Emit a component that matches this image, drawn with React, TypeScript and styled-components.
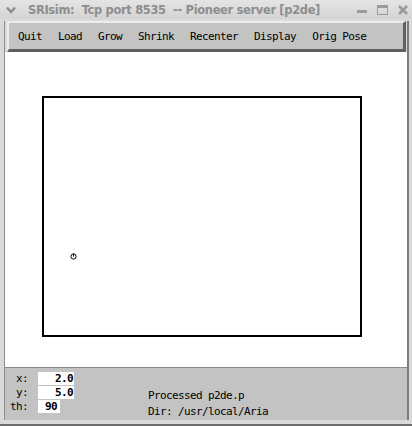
import React from "react";
import styled, { createGlobalStyle } from "styled-components";

const GlobalStyle = createGlobalStyle`
  html, body { margin: 0; padding: 0; background: #d9d9d9; overflow: hidden; }
  * { box-sizing: border-box; }
`;

const MONO = `"DejaVu Sans Mono", "Liberation Mono", monospace`;

const Window = styled.div`
  width: 412px;
  height: 426px;
  display: flex;
  flex-direction: column;
  background: #dadada;
  border-bottom: 2px solid #6e6e6e;
`;

const TitleBar = styled.div`
  height: 19px;
  display: flex;
  align-items: center;
  padding: 0 4px 0 6px;
  background: linear-gradient(#e4e4e4, #d4d4d4);
`;

const TitleText = styled.div`
  flex: 1;
  margin-left: 12px;
  font-family: "DejaVu Sans", Verdana, sans-serif;
  font-weight: bold;
  font-size: 11.5px;
  letter-spacing: -0.35px;
  color: #8e8e8e;
  white-space: pre;
`;

const Controls = styled.div`
  display: flex;
  align-items: center;
  gap: 10px;
`;

const FrameBody = styled.div`
  flex: 1;
  display: flex;
  flex-direction: column;
  margin: 2px 3px 4px 4px;
  border-left: 1px solid #8e8e8e;
  border-right: 2px solid #7c7c7c;
`;

const MenuBar = styled.div`
  height: 31px;
  margin: 0 1px 0 2px;
  display: flex;
  align-items: center;
  padding-left: 1px;
  background: #c3c3c3;
  border-top: 2px solid #ededed;
  border-left: 2px solid #ededed;
  border-bottom: 3px solid #606060;
  border-right: 3px solid #606060;
`;

const MenuItem = styled.span`
  padding: 0 8px;
  font-family: ${MONO};
  font-size: 11px;
  letter-spacing: -0.62px;
  color: #000;
  line-height: 13px;
`;

const Canvas = styled.div`
  height: 316px;
  background: #fff;
  border-bottom: 1px solid #8a8a8a;
`;

const StatusPanel = styled.div`
  flex: 1;
  display: flex;
  background: #c3c3c3;
  font-family: ${MONO};
  font-size: 11px;
  letter-spacing: -0.62px;
  color: #000;
`;

const PoseGrid = styled.div`
  display: grid;
  grid-template-columns: 23px auto;
  column-gap: 10px;
  row-gap: 1px;
  padding-top: 4px;
  align-content: start;
  width: 143px;
`;

const Label = styled.span`
  text-align: right;
  line-height: 13px;
`;

const Field = styled.span<{ $w: number; $align: "left" | "right" }>`
  width: ${(p) => p.$w}px;
  height: 13px;
  line-height: 13px;
  background: #fff;
  font-weight: bold;
  text-align: ${(p) => p.$align};
  padding: 0 1px 0 7px;
`;

const Messages = styled.div`
  display: flex;
  flex-direction: column;
  padding-top: 20px;
  line-height: 16px;
`;

const Chevron = () => (
  <svg width="10" height="8" viewBox="0 0 10 8">
    <path d="M1 1.5 L5 6 L9 1.5" fill="none" stroke="#8e8e8e" strokeWidth="2.4" />
  </svg>
);

const MinIcon = () => (
  <svg width="10" height="10" viewBox="0 0 10 10">
    <rect x="0" y="5" width="10" height="3" fill="#9a9a9a" />
  </svg>
);

const MaxIcon = () => (
  <svg width="11" height="10" viewBox="0 0 11 10">
    <rect x="0.5" y="0.5" width="10" height="9" fill="none" stroke="#9a9a9a" strokeWidth="1" />
    <rect x="0" y="0" width="11" height="3" fill="#9a9a9a" />
  </svg>
);

const CloseIcon = () => (
  <svg width="10" height="10" viewBox="0 0 10 10">
    <path d="M1 1 L9 9 M9 1 L1 9" stroke="#9a9a9a" strokeWidth="2.6" />
  </svg>
);

const menu = ["Quit", "Load", "Grow", "Shrink", "Recenter", "Display", "Orig Pose"];

export default function App() {
  return (
    <>
      <GlobalStyle />
      <Window>
        <TitleBar>
          <Chevron />
          <TitleText>{"SRIsim:  Tcp port 8535  -- Pioneer server [p2de]"}</TitleText>
          <Controls>
            <MinIcon />
            <MaxIcon />
            <CloseIcon />
          </Controls>
        </TitleBar>
        <FrameBody>
          <MenuBar>
            {menu.map((m) => (
              <MenuItem key={m}>{m}</MenuItem>
            ))}
          </MenuBar>
          <Canvas>
            <svg width="402" height="315" viewBox="0 0 402 315">
              <rect x="38" y="45" width="318" height="239" fill="none" stroke="#000" strokeWidth="2" />
              <circle cx="68.5" cy="204.5" r="2.6" fill="none" stroke="#000" strokeWidth="1" />
              <line x1="68.5" y1="204.5" x2="68.5" y2="201.5" stroke="#000" strokeWidth="1" />
            </svg>
          </Canvas>
          <StatusPanel>
            <PoseGrid>
              <Label>x:</Label>
              <Field $w={36} $align="right">2.0</Field>
              <Label>y:</Label>
              <Field $w={36} $align="right">5.0</Field>
              <Label>th:</Label>
              <Field $w={22} $align="left">90</Field>
            </PoseGrid>
            <Messages>
              <span>Processed p2de.p</span>
              <span>Dir: /usr/local/Aria</span>
            </Messages>
          </StatusPanel>
        </FrameBody>
      </Window>
    </>
  );
}
